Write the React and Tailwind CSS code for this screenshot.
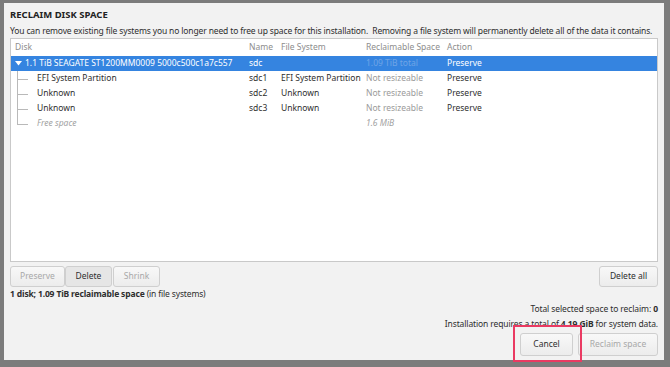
const rows = [
  { disk: 'EFI System Partition', name: 'sdc1', fs: 'EFI System Partition', space: 'Not resizeable', action: 'Preserve' },
  { disk: 'Unknown', name: 'sdc2', fs: 'Unknown', space: 'Not resizeable', action: 'Preserve' },
  { disk: 'Unknown', name: 'sdc3', fs: 'Unknown', space: 'Not resizeable', action: 'Preserve' },
];

const cols = 'grid grid-cols-[238px_32px_85px_81px_1fr] items-center';

function TreeBranch({ last = false }) {
  return (
    <div className="relative w-[26px] h-full shrink-0">
      <div className={`absolute left-[6px] top-0 w-px bg-[#b9b9b9] ${last ? 'h-1/2' : 'h-full'}`} />
      <div className="absolute left-[6px] top-1/2 w-[11px] h-px bg-[#b9b9b9]" />
    </div>
  );
}

function Button({ children, disabled = false, pressed = false, className = '' }) {
  return (
    <div
      className={`flex items-center justify-center rounded-[3px] border border-[#cfcfcf] ${
        pressed ? 'bg-[#e6e6e6]' : 'bg-gradient-to-b from-[#f8f8f8] to-[#ececec]'
      } ${disabled ? 'text-[#a8a8a8]' : 'text-[#2e2e2e]'} ${className}`}
    >
      {children}
    </div>
  );
}

export default function App() {
  return (
    <div
      className="w-[670px] h-[367px] bg-[#7c7c7c] pt-[3px] pl-[4px] overflow-hidden relative text-[8.5px] text-[#2e2e2e]"
      style={{ fontFamily: '"Noto Sans", "DejaVu Sans", sans-serif' }}
    >
      <div className="w-[660px] h-[357px] bg-[#f2f2f2] flex flex-col px-[6px]">
        <div className="mt-[6px] h-[12px] leading-[12px] font-bold text-[9.5px] text-[#222]">RECLAIM DISK SPACE</div>
        <div className="mt-[4px] h-[12px] leading-[12px] whitespace-nowrap tracking-[-0.14px]">
          You can remove existing file systems you no longer need to free up space for this installation.&nbsp; Removing a file system will permanently delete all of the data it contains.
        </div>

        <div className="mt-[1px] h-[224px] bg-white border border-[#c9c9c9] flex flex-col">
          <div className={`${cols} h-[17px] text-[#8d8d8d]`}>
            <div className="pl-[4px]">Disk</div>
            <div>Name</div>
            <div>File System</div>
            <div>Reclaimable Space</div>
            <div>Action</div>
          </div>
          <div className={`${cols} h-[15px] bg-[#3584e0] text-white`}>
            <div className="pl-[4px] flex items-center gap-[3px] whitespace-nowrap">
              <svg width="7" height="5" viewBox="0 0 7 5">
                <path d="M0 0 L7 0 L3.5 4.5 Z" fill="#ffffff" />
              </svg>
              1.1 TiB SEAGATE ST1200MM0009 5000c500c1a7c557
            </div>
            <div>sdc</div>
            <div />
            <div className="text-[#6fa4e6]">1.09 TiB total</div>
            <div>Preserve</div>
          </div>
          {rows.map((row, idx) => (
            <div key={`row-${idx}`} className={`${cols} h-[15px]`}>
              <div className="flex items-center h-full whitespace-nowrap">
                <TreeBranch />
                {row.disk}
              </div>
              <div>{row.name}</div>
              <div className="whitespace-nowrap">{row.fs}</div>
              <div className="text-[#9a9a9a] whitespace-nowrap">{row.space}</div>
              <div>{row.action}</div>
            </div>
          ))}
          <div className={`${cols} h-[15px] italic text-[#a2a2a2]`}>
            <div className="flex items-center h-full">
              <TreeBranch last />
              Free space
            </div>
            <div />
            <div />
            <div>1.6 MiB</div>
            <div />
          </div>
        </div>

        <div className="mt-[4px] flex h-[21px]">
          <Button disabled className="w-[55px]">Preserve</Button>
          <Button pressed className="w-[47px]">Delete</Button>
          <Button disabled className="w-[47px] ml-[1px]">Shrink</Button>
          <div className="flex-1" />
          <Button className="w-[59px]">Delete all</Button>
        </div>
        <div className="mt-[1px] h-[12px] leading-[12px] tracking-[-0.15px]">
          <span className="font-bold">1 disk; 1.09 TiB reclaimable space</span> (in file systems)
        </div>

        <div className="flex-1" />
        <div className="text-right h-[12px] leading-[12px] tracking-[-0.1px]">
          Total selected space to reclaim: <span className="font-bold">0</span>
        </div>
        <div className="mt-[3px] text-right h-[12px] leading-[12px] tracking-[-0.12px]">
          Installation requires a total of <span className="font-bold">4.19 GiB</span> for system data.
        </div>
        <div className="mt-[3px] mb-[4px] flex justify-end gap-[5px] h-[23px]">
          <Button className="w-[53px]">Cancel</Button>
          <Button disabled className="w-[80px]">Reclaim space</Button>
        </div>
      </div>

      <div className="absolute left-[513px] top-[325px] w-[69px] h-[37px] border-2 border-[#ea3a62]" />
    </div>
  );
}
